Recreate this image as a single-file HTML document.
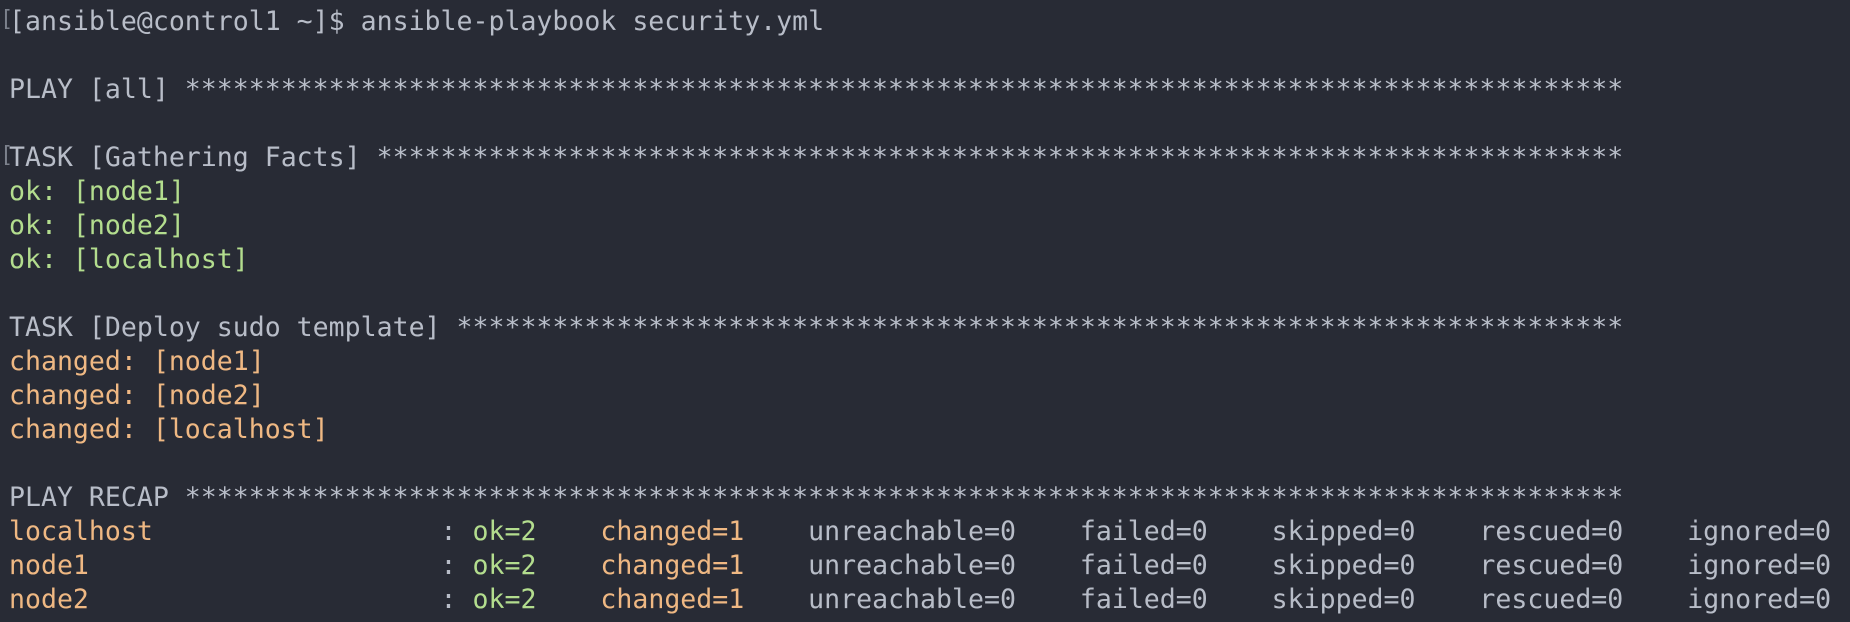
<!DOCTYPE html>
<html><head><meta charset="utf-8"><style>
html,body{margin:0;padding:0;background:#282b35;width:1850px;height:622px;overflow:hidden}
pre{margin:0;position:absolute;left:9px;top:5px;font-family:"DejaVu Sans Mono","Liberation Mono",monospace;font-size:26.55px;line-height:34px;color:#b8bdc8;white-space:pre}
.g{color:#b3dd8e}.o{color:#efb883}
.m{position:absolute;left:0;color:#7c818c;font-size:22px}
</style></head><body>
<pre>[ansible@control1 ~]$ ansible-playbook security.yml

PLAY [all] ******************************************************************************************

TASK [Gathering Facts] ******************************************************************************
<span class="g">ok: [node1]</span>
<span class="g">ok: [node2]</span>
<span class="g">ok: [localhost]</span>

TASK [Deploy sudo template] *************************************************************************
<span class="o">changed: [node1]</span>
<span class="o">changed: [node2]</span>
<span class="o">changed: [localhost]</span>

PLAY RECAP ******************************************************************************************
<span class="o">localhost</span>                  : <span class="g">ok=2</span>    <span class="o">changed=1</span>    unreachable=0    failed=0    skipped=0    rescued=0    ignored=0
<span class="o">node1</span>                      : <span class="g">ok=2</span>    <span class="o">changed=1</span>    unreachable=0    failed=0    skipped=0    rescued=0    ignored=0
<span class="o">node2</span>                      : <span class="g">ok=2</span>    <span class="o">changed=1</span>    unreachable=0    failed=0    skipped=0    rescued=0    ignored=0</pre>
<div class="m" style="top:7px;font-family:'DejaVu Sans Mono',monospace">[</div>
<div class="m" style="top:143px;font-family:'DejaVu Sans Mono',monospace">[</div>
</body></html>
